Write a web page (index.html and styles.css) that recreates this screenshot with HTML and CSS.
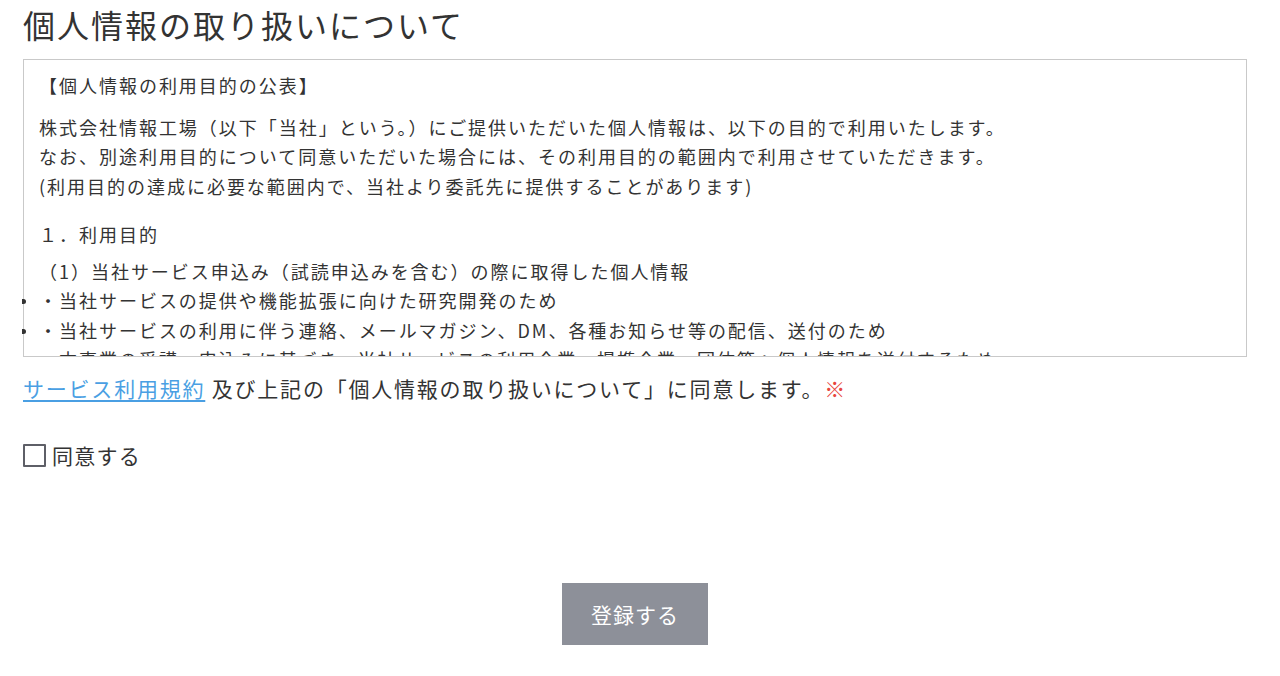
FILE: index.html
```html
<!DOCTYPE html>
<html lang="ja">
<head>
    <meta charset="UTF-8">
    <meta name="viewport" content="width=device-width, initial-scale=1.0">
    <title>個人情報の取り扱いについて</title>
    <link rel="stylesheet" href="styles.css">
</head>
<body>
    <div class="page">
        <h1 class="page-title">個人情報の取り扱いについて</h1>

        <div class="policy-box">
            <p class="policy-heading">【個人情報の利用目的の公表】</p>
            <p class="policy-text">株式会社情報工場（以下「当社」という。）にご提供いただいた個人情報は、以下の目的で利用いたします。<br>なお、別途利用目的について同意いただいた場合には、その利用目的の範囲内で利用させていただきます。<br>(利用目的の達成に必要な範囲内で、当社より委託先に提供することがあります)</p>
            <p class="policy-section">１．利用目的</p>
            <p class="policy-sub">（1）当社サービス申込み（試読申込みを含む）の際に取得した個人情報</p>
            <ul class="policy-list">
                <li>・当社サービスの提供や機能拡張に向けた研究開発のため</li>
                <li>・当社サービスの利用に伴う連絡、メールマガジン、DM、各種お知らせ等の配信、送付のため</li>
                <li>・本事業の受講・申込みに基づき、当社サービスの利用企業・提携企業・団体等へ個人情報を送付するため</li>
                <li>・当社サービスの利用状況に関する統計データの作成のため</li>
            </ul>
        </div>

        <p class="agree-text"><a href="#" class="terms-link">サービス利用規約</a> 及び上記の「個人情報の取り扱いについて」に同意します。<span class="required">※</span></p>

        <label class="agree-check">
            <input type="checkbox" class="check-input">
            <span>同意する</span>
        </label>

        <div class="submit-row">
            <button class="submit-btn">登録する</button>
        </div>
    </div>
</body>
</html>
```

FILE: styles.css
```css
body {
    margin: 0;
    font-family: "Noto Sans CJK JP", "Noto Sans", sans-serif;
    color: #333;
    background: #fff;
}
.page {
    width: 1224px;
    padding-left: 23px;
}
.page-title {
    margin: 6px 0 17px;
    font-size: 32px;
    line-height: 36px;
    font-weight: 400;
    letter-spacing: 2px;
}
.policy-box {
    box-sizing: border-box;
    height: 298px;
    padding: 11px 15px 0;
    border: 1px solid #c9c9c9;
    overflow-x: visible;
    overflow-y: clip;
    font-size: 18px;
    line-height: 29.5px;
    letter-spacing: 0.11em;
}
.policy-box p {
    margin: 0;
}
.policy-heading {
    margin-bottom: 12px !important;
}
.policy-text {
    margin-bottom: 19px !important;
}
.policy-section {
    margin-bottom: 7px !important;
}
.policy-list {
    margin: 0;
    padding: 0;
    list-style: none;
}
.policy-list li {
    position: relative;
    white-space: nowrap;
}
.policy-list li::before {
    content: "";
    position: absolute;
    left: -17px;
    top: 13px;
    width: 4px;
    height: 5px;
    border-radius: 0 3px 3px 0;
    background: #333;
}
.agree-text {
    margin: 16px 0 0;
    font-size: 21px;
    line-height: 30px;
    letter-spacing: 0.085em;
}
.terms-link {
    color: #4a9fe3;
    text-decoration: underline;
    text-underline-offset: 3px;
}
.required {
    color: #e8453c;
}
.agree-check {
    display: flex;
    align-items: center;
    gap: 6px;
    margin-top: 40px;
    font-size: 21px;
    line-height: 24px;
    letter-spacing: 0.06em;
    width: max-content;
}
.check-input {
    appearance: none;
    box-sizing: border-box;
    width: 23px;
    height: 23px;
    margin: 0;
    border: 2px solid #5e5f67;
    border-radius: 1px;
    background: #fff;
}
.submit-row {
    display: flex;
    justify-content: center;
    margin-top: 116px;
}
.submit-btn {
    width: 146px;
    height: 62px;
    border: none;
    background: #8d9099;
    color: #fff;
    font-family: inherit;
    font-size: 21px;
    letter-spacing: 0.05em;
    padding: 0;
    cursor: pointer;
}
```
